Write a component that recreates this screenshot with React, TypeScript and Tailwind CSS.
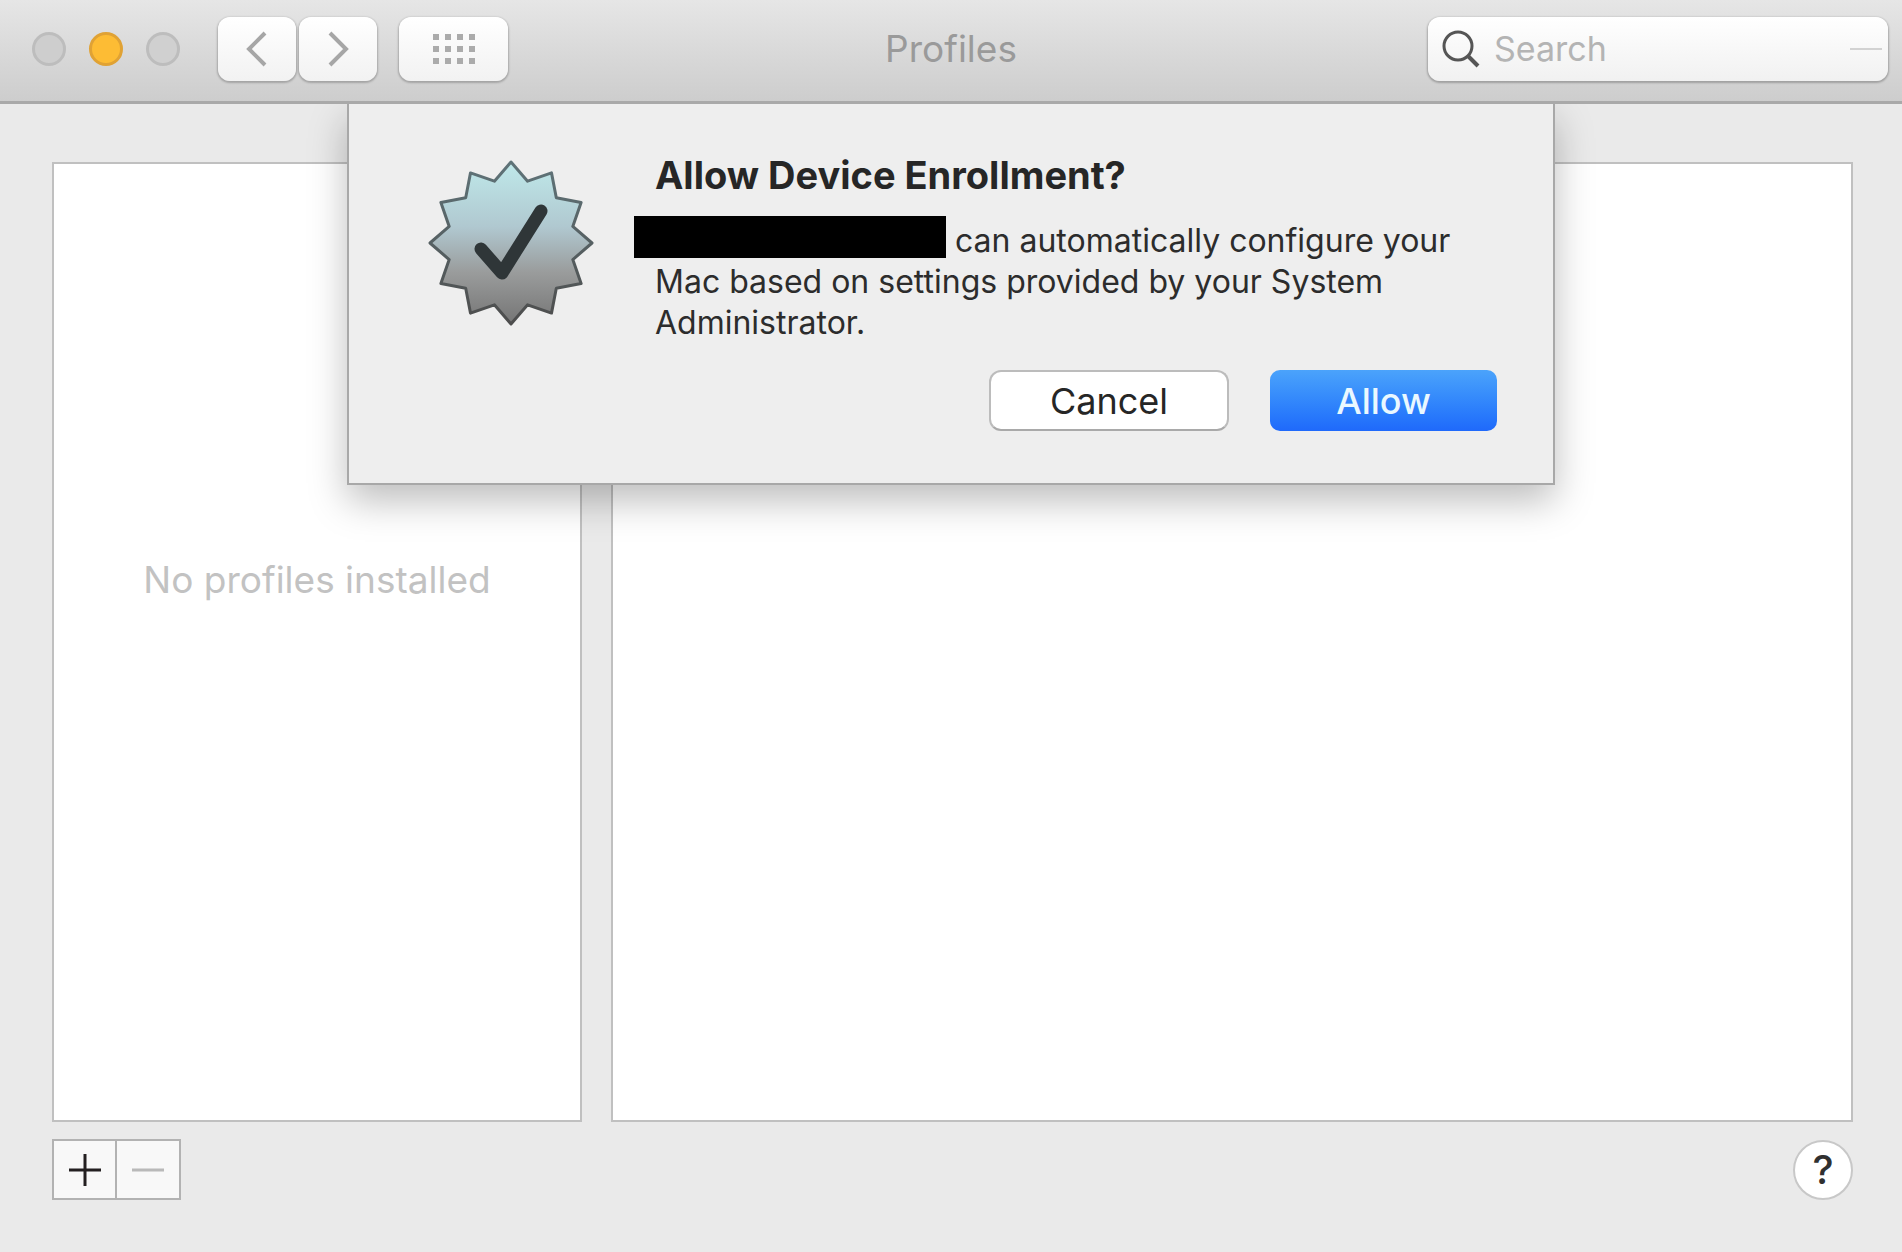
import React from "react";

const POINTS = 12;
const badgePath =
  Array.from({ length: POINTS * 2 }, (_, i) => {
    const r = i % 2 === 0 ? 81 : 64;
    const a = (Math.PI * i) / POINTS - Math.PI / 2;
    const x = (84 + r * Math.cos(a)).toFixed(1);
    const y = (84 + r * Math.sin(a)).toFixed(1);
    return `${i === 0 ? "M" : "L"}${x} ${y}`;
  }).join(" ") + " Z";

function Badge() {
  return (
    <svg width="168" height="168" viewBox="0 0 168 168" className="mt-1 shrink-0" aria-hidden="true">
      <defs>
        <linearGradient id="badge-fill" x1="0" y1="0" x2="0" y2="1">
          <stop offset="0" stopColor="#bfe9ea" />
          <stop offset="0.4" stopColor="#b0c8d0" />
          <stop offset="0.68" stopColor="#9a9c9c" />
          <stop offset="1" stopColor="#757575" />
        </linearGradient>
        <linearGradient id="badge-edge" x1="0" y1="0" x2="0" y2="1">
          <stop offset="0" stopColor="#5f7378" />
          <stop offset="1" stopColor="#4d4d4d" />
        </linearGradient>
      </defs>
      <path d={badgePath} fill="url(#badge-fill)" stroke="url(#badge-edge)" strokeWidth="3" strokeLinejoin="round" />
      <path d="M54 90 L75 114 L114 52" fill="none" stroke="#2f3638" strokeWidth="13" strokeLinecap="round" strokeLinejoin="round" />
    </svg>
  );
}

const toolButton =
  "flex h-16 items-center justify-center rounded-xl bg-linear-to-b from-white to-[#f2f2f2] shadow-[0_1px_2px_1px_rgba(0,0,0,0.22)]";

function Toolbar() {
  return (
    <header className="grid h-[104px] grid-cols-[1fr_auto_1fr] items-center border-b-3 border-[#a9a9a9] bg-linear-to-b from-[#e6e6e6] to-[#cdcdcd] px-[14px] pb-[3px]">
      <div className="flex items-center pl-[18px]">
        <div className="flex gap-[23px]">
          <button aria-label="Close" className="size-[34px] rounded-full border-3 border-[#bdbdbd] bg-[#cecece]" />
          <button aria-label="Minimize" className="size-[34px] rounded-full border-3 border-[#e0a234] bg-[#fdbc34]" />
          <button aria-label="Zoom" className="size-[34px] rounded-full border-3 border-[#bdbdbd] bg-[#d0d0d0]" />
        </div>
        <div className="ml-[38px] flex gap-[3px]">
          <button aria-label="Back" className={`${toolButton} w-[78px]`}>
            <svg width="22" height="36" viewBox="0 0 22 36" fill="none" stroke="#a6a6a6" strokeWidth="4">
              <path d="M19 2 L3 18 L19 34" />
            </svg>
          </button>
          <button aria-label="Forward" className={`${toolButton} w-[78px]`}>
            <svg width="22" height="36" viewBox="0 0 22 36" fill="none" stroke="#a6a6a6" strokeWidth="4">
              <path d="M3 2 L19 18 L3 34" />
            </svg>
          </button>
        </div>
        <button aria-label="Show all" className={`${toolButton} ml-[22px] w-[109px]`}>
          <span className="grid grid-cols-4 gap-[6px]">
            {Array.from({ length: 12 }, (_, i) => (
              <span key={i} className="size-[6px] bg-[#ababab]" />
            ))}
          </span>
        </button>
      </div>
      <h1 className="text-[37px] leading-10 text-[#9a9a9a]">Profiles</h1>
      <label className="flex h-16 w-[460px] items-center justify-self-end rounded-xl bg-linear-to-b from-white to-[#f1f1f1] pr-[6px] pl-[14px] shadow-[0_1px_2px_1px_rgba(0,0,0,0.24)]">
        <svg width="38" height="38" viewBox="0 0 38 38" fill="none" stroke="#555555" strokeWidth="3" aria-hidden="true">
          <circle cx="16" cy="16" r="14" />
          <path d="M26 26 L36 36" strokeWidth="4" />
        </svg>
        <input
          type="text"
          aria-label="Search"
          placeholder="Search"
          className="ml-[14px] min-w-0 flex-1 bg-transparent text-[34px] leading-10 outline-none placeholder:text-[#b4b4b4]"
        />
        <span className="h-[2px] w-8 bg-[#d2d2d2]" />
      </label>
    </header>
  );
}

function EnrollmentDialog() {
  return (
    <div
      role="dialog"
      aria-labelledby="enroll-title"
      className="absolute top-0 left-1/2 w-[1208px] -translate-x-1/2 border-2 border-t-0 border-[#a8a8a8] bg-[#eeeeee] pt-[51px] pr-[56px] pb-[52px] pl-[78px] shadow-[0_16px_36px_rgba(0,0,0,0.26)] [clip-path:inset(0_-80px_-80px_-80px)]"
    >
      <div className="flex gap-[60px]">
        <Badge />
        <div className="flex-1">
          <h2 id="enroll-title" className="text-[38px] leading-10 font-bold text-[#262626]">
            Allow Device Enrollment?
          </h2>
          <p className="mt-[25px] text-[32px] leading-[41px] text-[#2c2c2c]">
            <span className="-my-[6px] -ml-[21px] inline-block h-[42px] w-[312px] bg-black align-baseline" /> can automatically configure your
            Mac based on settings provided by your System Administrator.
          </p>
        </div>
      </div>
      <div className="mt-[27px] flex justify-end gap-[41px]">
        <button className="h-[61px] w-60 rounded-xl border-2 border-[#bcbcbc] border-b-[#a9a9a9] bg-white text-[36px] leading-10 text-[#262626]">
          Cancel
        </button>
        <button className="h-[61px] w-[227px] rounded-[10px] bg-linear-to-b from-[#4ba3fb] to-[#1f69fb] text-[36px] leading-10 font-medium text-[#eaf8ff]">
          Allow
        </button>
      </div>
    </div>
  );
}

export default function App() {
  return (
    <div className="flex min-h-screen flex-col bg-[#eaeaea] font-['Inter',sans-serif]">
      <Toolbar />
      <main className="relative flex flex-1 flex-col pt-[58px] pr-[49px] pb-[52px] pl-[52px]">
        <div className="grid flex-1 grid-cols-[530fr_1242fr] gap-[29px]">
          <section className="flex justify-center border-2 border-[#c0c0c0] bg-white pt-[396px]">
            <p className="text-[37px] leading-10 text-[#c2c2c2]">No profiles installed</p>
          </section>
          <section className="border-2 border-[#c0c0c0] bg-white" />
        </div>
        <div className="mt-[17px] flex items-center justify-between">
          <div className="flex h-[61px] border-2 border-[#b2b2b2] bg-[#f8f8f8]">
            <button aria-label="Add profile" className="flex w-[63px] items-center justify-center border-r-2 border-[#b2b2b2]">
              <svg width="32" height="32" viewBox="0 0 32 32" stroke="#231f20" strokeWidth="3">
                <path d="M0 16 H32 M16 0 V32" />
              </svg>
            </button>
            <button aria-label="Remove profile" className="flex w-[62px] items-center justify-center">
              <svg width="32" height="32" viewBox="0 0 32 32" stroke="#b9b9b9" strokeWidth="3">
                <path d="M0 16 H32" />
              </svg>
            </button>
          </div>
          <button aria-label="Help" className="size-[60px] rounded-full border-2 border-[#c8c8c8] bg-white text-[40px] leading-none font-medium text-[#303030]">
            ?
          </button>
        </div>
        <EnrollmentDialog />
      </main>
    </div>
  );
}
